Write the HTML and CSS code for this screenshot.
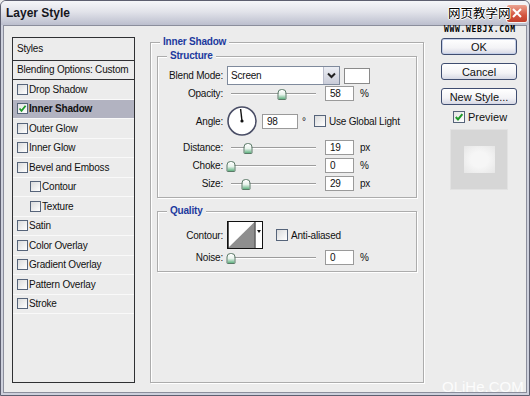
FILE: index.html
```html
<!DOCTYPE html>
<html lang="en">
<head>
  <meta charset="UTF-8">
  <title>Layer Style</title>
  <link rel="stylesheet" href="styles.css">
</head>
<body>
  <div class="window">
    <div class="titlebar">
      <span class="title">Layer Style</span>
      <span class="close">
        <svg width="10" height="10" viewBox="0 0 10 10"><path d="M1 1L9 9M9 1L1 9" stroke="#fff" stroke-width="2"/></svg>
      </span>
    </div>

    <div class="dialog">
      <div class="styles-list">
        <div class="list-head">Styles</div>
        <div class="list-blend">Blending Options: Custom</div>
        <div class="item"><span class="check"></span>Drop Shadow</div>
        <div class="item selected"><span class="check on"><svg width="9" height="9" viewBox="0 0 9 9"><path d="M1.5 4.5L3.5 6.8L7.6 1.8" fill="none" stroke="#1f9a2a" stroke-width="1.8"/></svg></span>Inner Shadow</div>
        <div class="item"><span class="check"></span>Outer Glow</div>
        <div class="item"><span class="check"></span>Inner Glow</div>
        <div class="item"><span class="check"></span>Bevel and Emboss</div>
        <div class="item sub"><span class="check"></span>Contour</div>
        <div class="item sub"><span class="check"></span>Texture</div>
        <div class="item"><span class="check"></span>Satin</div>
        <div class="item"><span class="check"></span>Color Overlay</div>
        <div class="item"><span class="check"></span>Gradient Overlay</div>
        <div class="item"><span class="check"></span>Pattern Overlay</div>
        <div class="item"><span class="check"></span>Stroke</div>
      </div>

      <fieldset class="panel">
        <legend>Inner Shadow</legend>

        <fieldset class="group structure">
          <legend>Structure</legend>
          <div class="row blend-row">
            <label>Blend Mode:</label>
            <div class="select">
              <span class="select-text">Screen</span>
              <span class="select-btn">
                <svg width="9" height="7" viewBox="0 0 9 7"><path d="M1 1.5L4.5 5L8 1.5" fill="none" stroke="#222" stroke-width="2"/></svg>
              </span>
            </div>
            <span class="swatch"></span>
          </div>
          <div class="row slider-row">
            <label>Opacity:</label>
            <div class="slider"><span class="thumb" style="left:60%"></span></div>
            <span class="field">58</span><span class="unit">%</span>
          </div>
          <div class="row angle-row">
            <label>Angle:</label>
            <svg class="dial" width="30" height="30" viewBox="0 0 30 30">
              <circle cx="15" cy="15" r="14" fill="#fff" stroke="#4a4e66" stroke-width="1.6"/>
              <line x1="15" y1="15" x2="13.6" y2="3" stroke="#111" stroke-width="1.4"/>
              <circle cx="15" cy="15" r="1.6" fill="#111"/>
            </svg>
            <span class="field wide">98</span><span class="deg">°</span>
            <span class="check box12"></span><span class="check-label">Use Global Light</span>
          </div>
          <div class="row slider-row gap4">
            <label>Distance:</label>
            <div class="slider"><span class="thumb" style="left:20%"></span></div>
            <span class="field">19</span><span class="unit">px</span>
          </div>
          <div class="row slider-row">
            <label>Choke:</label>
            <div class="slider"><span class="thumb" style="left:0%"></span></div>
            <span class="field">0</span><span class="unit">%</span>
          </div>
          <div class="row slider-row">
            <label>Size:</label>
            <div class="slider"><span class="thumb" style="left:18%"></span></div>
            <span class="field">29</span><span class="unit">px</span>
          </div>
        </fieldset>

        <fieldset class="group quality">
          <legend>Quality</legend>
          <div class="row contour-row">
            <label>Contour:</label>
            <svg class="contour" width="36" height="28" viewBox="0 0 36 28">
              <rect x="0.5" y="0.5" width="35" height="27" fill="#fff" stroke="#111"/>
              <polygon points="1,27 27.5,1 27.5,27" fill="#8e8e8e"/>
              <line x1="28" y1="1" x2="28" y2="27" stroke="#111"/>
              <line x1="1" y1="1" x2="1" y2="27" stroke="#111" stroke-width="1.4"/>
              <polygon points="30,9 34,9 32,12" fill="#111"/>
            </svg>
            <span class="check box12 aa"></span><span class="check-label">Anti-aliased</span>
          </div>
          <div class="row slider-row">
            <label>Noise:</label>
            <div class="slider"><span class="thumb" style="left:0%"></span></div>
            <span class="field">0</span><span class="unit">%</span>
          </div>
        </fieldset>
      </fieldset>

      <div class="actions">
        <button class="btn default">OK</button>
        <button class="btn">Cancel</button>
        <button class="btn">New Style...</button>
        <div class="preview-toggle">
          <span class="check box12 on"><svg width="10" height="10" viewBox="0 0 10 10"><path d="M1.8 5L4 7.5L8.4 2.2" fill="none" stroke="#1f9a2a" stroke-width="2"/></svg></span>
          <span>Preview</span>
        </div>
        <div class="preview"><div class="preview-swatch"></div></div>
      </div>
    </div>

    <div class="mark-cn">网页教学网</div>
    <div class="mark-url">WWW.WEBJX.COM</div>
    <div class="mark-bottom">OLiHe.COM</div>
  </div>
</body>
</html>
```

FILE: styles.css
```css
body {
  margin: 0;
  font-family: "Liberation Sans", Arial, sans-serif;
  font-size: 10px;
  letter-spacing: -0.2px;
  color: #111;
  background: #ececec;
}

.window {
  position: relative;
  width: 530px;
  height: 396px;
  box-sizing: border-box;
  border: 1px solid #5d5f70;
  border-radius: 6px 6px 0 0;
  background: #cdd0dc;
  display: flex;
  flex-direction: column;
  overflow: hidden;
}

/* title bar */
.titlebar {
  height: 24px;
  flex: none;
  display: flex;
  align-items: center;
  justify-content: space-between;
  padding: 0 1px 0 5px;
  background: linear-gradient(#f5f6f9, #e2e3ea 45%, #bcbfce);
}

.title {
  font-weight: bold;
  font-size: 12px;
  letter-spacing: 0;
  color: #15161c;
}

.close {
  width: 22px;
  height: 19px;
  box-sizing: border-box;
  border: 1px solid #f4f4f4;
  border-radius: 3px;
  background: linear-gradient(#eba391, #d4553f 60%, #c2402c);
  display: flex;
  align-items: center;
  justify-content: center;
}

/* dialog body */
.dialog {
  flex: 1;
  margin: 0 2px 2px;
  border: 1px solid #8b8e9c;
  background: #ececec;
  display: flex;
  align-items: flex-start;
  padding: 11px 0 0 8px;
}

.styles-list {
  width: 123px;
  height: 346px;
  flex: none;
  box-sizing: border-box;
  border: 1px solid #2f3033;
  background: #ececec;
}

.list-head {
  height: 23px;
  box-sizing: border-box;
  line-height: 21px;
  padding-left: 4px;
  border-bottom: 1px solid #2f3033;
}

.list-blend {
  height: 19px;
  box-sizing: border-box;
  line-height: 18px;
  padding-left: 4px;
  border-bottom: 1px solid #2f3033;
  white-space: nowrap;
}

.item {
  height: 19.5px;
  box-sizing: border-box;
  display: flex;
  align-items: center;
  padding-left: 4px;
  border-bottom: 1px solid #f9f9f9;
}

.item.sub {
  padding-left: 17px;
}

.item.selected {
  background: #b2b3c1;
  font-weight: bold;
}

.check {
  width: 11px;
  height: 11px;
  flex: none;
  box-sizing: border-box;
  border: 1px solid #56647a;
  background: linear-gradient(135deg, #dadbdc, #ffffff);
  margin-right: 1px;
  display: flex;
  align-items: center;
  justify-content: center;
}

.check.box12 {
  width: 12px;
  height: 12px;
}

.check.on {
  background: linear-gradient(135deg, #e4e4e4, #ffffff);
}

/* middle panel */
fieldset {
  margin: 0;
  min-width: 0;
  box-sizing: border-box;
  border: 1px solid #acacac;
  box-shadow: inset 1px 1px 0 #fff, 1px 1px 0 #fff;
}

legend {
  padding: 0 3px;
  margin-left: 3px;
  line-height: 12px;
  font-weight: bold;
  color: #1d3a9e;
  background: #ececec;
}

.panel {
  width: 274px;
  height: 347px;
  margin: -1px 0 0 15px;
  padding: 0 6px;
  flex: none;
}

.group {
  margin-top: 2px;
  padding: 0 6px 6px;
}

.group.quality {
  margin-top: 7px;
}

.row {
  display: flex;
  align-items: center;
  height: 15px;
  margin-top: 3px;
}

.row label {
  width: 59px;
  margin-right: 4px;
  text-align: right;
  flex: none;
}

.blend-row {
  height: 19px;
  margin-top: 4px;
}

.slider-row:nth-child(3) {
  margin-top: 1px;
}

.angle-row {
  height: 30px;
  margin-top: 5px;
}

.gap4 {
  margin-top: 4px;
}

.select {
  width: 113px;
  height: 19px;
  box-sizing: border-box;
  border: 1px solid #7f8a9c;
  background: #fff;
  display: flex;
  align-items: stretch;
}

.select-text {
  flex: 1;
  padding-left: 3px;
  line-height: 17px;
}

.select-btn {
  width: 15px;
  border-left: 1px solid #b9bccb;
  background: linear-gradient(#eceef4, #c9ccd8);
  display: flex;
  align-items: center;
  justify-content: center;
}

.swatch {
  width: 26px;
  height: 16px;
  box-sizing: border-box;
  margin-left: 4px;
  border: 1px solid #8a8a8a;
  background: #fff;
}

.slider {
  position: relative;
  width: 85px;
  height: 2px;
  box-sizing: border-box;
  margin: 0 9px 0 4px;
  border-top: 1px solid #9c9c9c;
  border-bottom: 1px solid #fff;
}

.thumb {
  position: absolute;
  top: -5px;
  width: 9px;
  height: 11px;
  transform: translateX(-50%);
  box-sizing: border-box;
  border: 1px solid #5b7a68;
  border-radius: 4px 4px 1px 1px;
  background: linear-gradient(#ffffff, #e8f3ec 50%, #62b382);
}

.field {
  width: 29px;
  height: 15px;
  box-sizing: border-box;
  border: 1px solid #9a9a9a;
  background: #fff;
  padding-left: 4px;
  line-height: 13px;
}

.field.wide {
  width: 36px;
  margin-left: 5px;
}

.unit {
  margin-left: 6px;
}

.deg {
  margin-left: 4px;
  width: 6px;
}

.angle-row .check {
  margin-left: 6px;
}

.check-label {
  margin-left: 2px;
}

.contour-row {
  height: 28px;
  margin-top: 4px;
}

.contour-row .aa {
  margin-left: 13px;
}

/* right column */
.actions {
  margin-left: 17px;
  width: 76px;
  flex: none;
  display: flex;
  flex-direction: column;
  align-items: flex-start;
  padding-top: 1px;
}

.btn {
  width: 76px;
  height: 17px;
  margin-bottom: 8px;
  padding: 0;
  font-family: "Liberation Sans", Arial, sans-serif;
  font-size: 11px;
  color: #111;
  border: 1px solid #3f4d70;
  border-radius: 3px;
  background: linear-gradient(#ffffff, #f3f3f6 60%, #d6d8e4);
}

.btn.default {
  box-shadow: inset 0 0 0 1px #c4cfe8;
}

.btn:nth-child(3) {
  margin-bottom: 0;
}

.preview-toggle {
  display: flex;
  align-items: center;
  margin: 6px 0 0 12px;
  font-size: 11px;
  letter-spacing: 0;
  gap: 2px;
}

.preview {
  width: 58px;
  height: 61px;
  box-sizing: border-box;
  margin: 6px 0 0 9px;
  border: 1px solid #e2e2e2;
  background: #d6d6d6;
  display: flex;
  align-items: center;
  justify-content: center;
}

.preview-swatch {
  width: 31px;
  height: 27px;
  background: radial-gradient(ellipse at 50% 50%, #f6f6f6 40%, #e6e6e6 100%);
}

/* watermarks */
.mark-cn {
  position: absolute;
  left: 447px;
  top: 6px;
  font-family: "Noto Sans CJK SC", sans-serif;
  font-size: 12.5px;
  line-height: 1;
  letter-spacing: 0;
  color: #000;
  text-shadow: 1px 0 #fff, -1px 0 #fff, 0 1px #fff, 0 -1px #fff;
}

.mark-url {
  position: absolute;
  left: 443px;
  top: 25px;
  font-family: "DejaVu Sans Mono", monospace;
  font-weight: bold;
  font-size: 8px;
  letter-spacing: 0.7px;
  line-height: 8px;
  color: #000;
}

.mark-bottom {
  position: absolute;
  left: 441px;
  top: 378px;
  font-size: 15px;
  line-height: 15px;
  letter-spacing: 0;
  color: rgba(255, 255, 255, 0.85);
}
```
